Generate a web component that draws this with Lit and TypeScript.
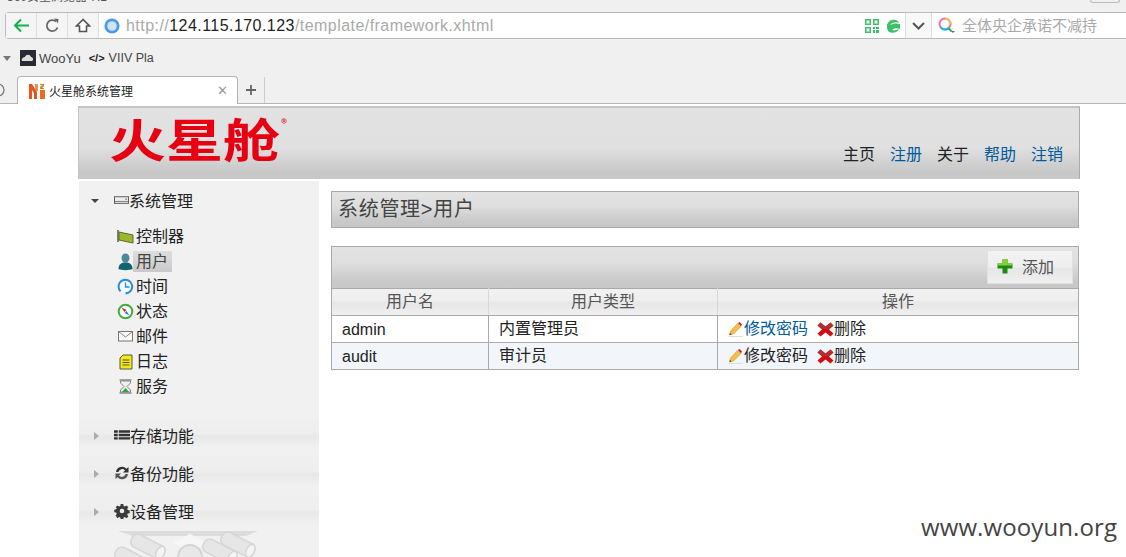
import { LitElement, html, css, svg } from "lit";
import { customElement } from "lit/decorators.js";

const icons: Record<string, unknown> = {
  ctrl: svg`<svg width="18" height="16" viewBox="0 0 18 16"><path d="M1 1v12" stroke="#555" stroke-width="1.5"/><path d="M2 3l14 3v8L2 11z" fill="#9ab82c" stroke="#5c6b2a"/></svg>`,
  user: svg`<svg width="17" height="18" viewBox="0 0 17 18"><ellipse cx="8.5" cy="5" rx="4" ry="4.6" fill="#4d8a96"/><path d="M1.500 16c0-5 3-6.500 7-6.500s7 1.500 7 6.500c-3 1.500-11 1.500-14 0z" fill="#0f6372"/></svg>`,
  time: svg`<svg width="17" height="17" viewBox="0 0 17 17"><path d="M3.600 13.300A6.800 6.800 0 1 1 8.500 15.300" fill="#fff" stroke="#2290dd" stroke-width="2"/><path d="M8.500 4.500v4.500h4" fill="none" stroke="#2290dd" stroke-width="1.300"/></svg>`,
  state: svg`<svg width="17" height="17" viewBox="0 0 17 17"><circle cx="8.500" cy="8.500" r="6.800" fill="#fff" stroke="#3fae38" stroke-width="2"/><path d="M4.500 4.500l5 2.500-2 2z" fill="#e8102a"/><path d="M12.500 12.500l-5-2.500 2-2z" fill="#1e7fd8"/></svg>`,
  mail: svg`<svg width="16" height="12" viewBox="0 0 16 12"><rect x=".5" y=".5" width="14" height="9.500" fill="#fafafa" stroke="#777"/><path d="M1 1l6.500 5L14 1" fill="none" stroke="#888"/></svg>`,
  log: svg`<svg width="14" height="16" viewBox="0 0 14 16"><path d="M4 1h9v14H1V4z" fill="#f6e90e" stroke="#555"/><path d="M3.500 6h7M3.500 8.500h7M3.500 11h7" stroke="#555"/></svg>`,
  svc: svg`<svg width="13" height="15" viewBox="0 0 13 15"><path d="M.5 1h12M.5 14h12" stroke="#888" stroke-width="1.600"/><path d="M1.500 2h10v2L8 7.500l3.500 3.500v2h-10v-2L5 7.500 1.500 4z" fill="#eee" stroke="#888"/><path d="M3 13l3.500-4 3.500 4z" fill="#25a83c"/></svg>`,
  sys: svg`<svg width="16" height="9" viewBox="0 0 16 9"><rect x=".5" y=".5" width="15" height="7" fill="#eee" stroke="#555"/><path d="M1 5.500h14" stroke="#777"/><path d="M12 3h2" stroke="#555"/></svg>`,
  store: svg`<svg width="17" height="10" viewBox="0 0 17 10"><path d="M0 0h4v2.500H0zM5 0h12v2.500H5zM0 3.700h4v2.500H0zM5 3.700h12v2.500H5zM0 7.400h4v2.500H0zM5 7.400h12v2.500H5z" fill="#333"/></svg>`,
  backup: svg`<svg width="16" height="14" viewBox="0 0 16 14"><path d="M2 6a6 6 0 0 1 10.500-3.200L14.500 1v5.500H9l2-2A3.700 3.700 0 0 0 4.500 6z" fill="#333"/><path d="M14 8a6 6 0 0 1-10.500 3.200L1.500 13V7.500H7l-2 2A3.700 3.700 0 0 0 11.500 8z" fill="#555"/></svg>`,
  gear: svg`<svg width="16" height="16" viewBox="0 0 16 16"><path d="M6.500 0h3l.4 2.200 1.500.6L13.300 1.500l2.100 2.100-1.300 1.900.6 1.500 2.300.5v3l-2.300.4-.6 1.500 1.300 1.900-2.100 2.100-1.900-1.300-1.500.6-.4 2.200h-3l-.4-2.200-1.500-.6-1.900 1.300L.6 13.300l1.300-1.900-.6-1.500L-1 9.500v-3l2.300-.5.6-1.500L.6 3.600 2.700 1.500l1.900 1.300 1.500-.6zM8 5.300a2.700 2.700 0 1 0 0 5.400 2.700 2.700 0 0 0 0-5.400z" transform="translate(1.100 1.100) scale(.86)" fill="#3a3a3a"/></svg>`,
  pencil: svg`<svg width="16" height="15" viewBox="0 0 15 15"><path d="M0 14.500h14" stroke="#ddd"/><path d="M1 13l1-4 7-7.500 3.500 3L5 12z" fill="#f2bf4a" stroke="#d6972a" stroke-width=".6"/><path d="M9.500 1l1.500-1 2.500 2.500-1 1.800z" fill="#c4202a"/><path d="M1 13l.5-2 1.500 1.300z" fill="#333"/></svg>`,
  del: svg`<svg width="17" height="15" viewBox="0 0 16 15"><path d="M3 .500l5 4 5-4 3 3-4.500 4 4.500 4-3 3-5-4-5 4-3-3 4.500-4L0 3.500z" fill="#d40d12"/><path d="M3 .500l5 4 5-4 3 3-4 3.500H4L0 3.500z" fill="#a83a3a" opacity=".75"/></svg>`,
};

const subItems = [
  ["ctrl", "控制器"], ["user", "用户"], ["time", "时间"], ["state", "状态"],
  ["mail", "邮件"], ["log", "日志"], ["svc", "服务"],
];
const groups = [["store", "存储功能"], ["backup", "备份功能"], ["gear", "设备管理"]];
const navs: [string, boolean][] = [["主页", false], ["注册", true], ["关于", false], ["帮助", true], ["注销", true]];
const rows: [string, string, boolean][] = [["admin", "内置管理员", true], ["audit", "审计员", false]];
const capsules = [[6, 14], [22, 1], [94, 6], [112, -1]];

@customElement("app-root")
export class AppRoot extends LitElement {
  static styles = css`
    :host { display: block; width: 1126px; height: 557px; position: relative; overflow: hidden; background: #fff; font-family: "Liberation Sans", "Noto Sans CJK SC", sans-serif; color: #222; }
    .chrome { background: #f0f0f0; height: 104px; display: flex; flex-direction: column; box-sizing: border-box; }
    .title { height: 12px; overflow: hidden; display: flex; justify-content: space-between; padding: 0 6px 0 7px; }
    .title span { font-size: 12px; line-height: 12px; margin-top: -9px; color: #555; }
    .winbox { width: 28px; height: 2px; border: 1px solid #bbb; border-top: 0; border-radius: 0 0 3px 3px; }
    .addr { height: 27px; margin-left: 5px; box-sizing: border-box; border: 1px solid #bbb; border-right: 0; border-radius: 4px 0 0 4px; background: #fff; display: flex; align-items: center; }
    .nb { width: 31px; height: 25px; box-sizing: border-box; display: flex; align-items: center; justify-content: center; background: #f5f5f5; border-right: 1px solid #ddd; flex: none; }
    .globe { margin: 0 6px 0 5px; display: flex; }
    .url { font-size: 16px; color: #aaa; flex: 1; white-space: nowrap; letter-spacing: .45px; }
    .url b { font-weight: 400; color: #222; }
    .qr { display: flex; gap: 7px; align-items: center; padding-right: 5px; }
    .sep { width: 25px; height: 25px; display: flex; align-items: center; justify-content: center; border-left: 1px solid #ddd; border-right: 1px solid #ddd; background: #f8f8f8; }
    .search { width: 194px; display: flex; align-items: center; padding-left: 6px; box-sizing: border-box; font-size: 15px; color: #aaa; gap: 7px; white-space: nowrap; }
    .search span { padding-bottom: 2px; }
    .bm { height: 37px; display: flex; align-items: center; font-size: 13px; color: #444; padding-top: 1px; box-sizing: border-box; }
    .bm .caret { width: 0; height: 0; border: 4px solid transparent; border-top: 5px solid #777; border-bottom: 0; margin: 0 9px 0 3px; }
    .bm .wy { width: 16px; height: 16px; background: #2a2a34; display: flex; margin-right: 3px; }
    .bm .code { font-size: 11px; font-weight: 700; margin: 0 4px 0 8px; color: #222; }
    .bm .v { font-size: 12.500px; }
    .tabs { height: 28px; display: flex; align-items: flex-end; position: relative; border-bottom: 1px solid #b5b5b5; box-sizing: border-box; }
    .circle { width: 17px; height: 26px; display: flex; align-items: center; }
    .tab { width: 221px; height: 28px; background: #fff; box-sizing: border-box; border: 1px solid #b5b5b5; border-bottom: 0; border-radius: 4px 4px 0 0; display: flex; align-items: center; padding: 0 9px 0 11px; font-size: 12px; color: #222; margin-bottom: -1px; }
    .tab .fav { margin-right: 4px; display: flex; }
    .tab .tx { flex: 1; }
    .tab .x { color: #999; font-size: 13px; line-height: 1; }
    .plus { width: 26px; height: 26px; display: flex; align-items: center; justify-content: center; border-right: 1px solid #ccc; }
    .page { width: 1002px; margin-left: 78px; display: flex; flex-direction: column; }
    .hd { margin-top: 2px; height: 73px; box-sizing: border-box; border: 1px solid #c4c4c4; border-bottom: 0; border-right-color: #aaa; border-top-width: 2px; background: linear-gradient(#e2e2e2 0, #e0e0e0 55%, #c8c8c8 90%, #c8c8c8); display: flex; justify-content: space-between; }
    .logo { font-family: "Noto Sans CJK SC", sans-serif; font-weight: 700; color: #e60012; font-size: 46px; line-height: 46px; margin: 6px 0 0 30px; width: 172px; white-space: nowrap; transform-origin: 0 0; transform: scaleX(1.24); position: relative; }
    .logo sup { position: absolute; left: 139px; top: 3px; font-size: 12px; line-height: 12px; font-weight: 400; transform: scaleX(.8); transform-origin: 0 0; }
    .nav { display: flex; gap: 15px; font-size: 16px; align-items: flex-end; padding: 0 16px 14px 0; line-height: 20px; color: #222; }
    .nav .lk { color: #005a9c; }
    .body { display: flex; margin-top: 2px; margin-left: 1px; }
    .side { width: 240px; height: 376px; background: #f1f1f1; flex: none; display: flex; flex-direction: column; overflow: hidden; }
    .head { height: 38px; box-sizing: border-box; padding-bottom: 2px; display: flex; align-items: center; font-size: 16px; color: #222; flex: none; }
    .tri-d { width: 0; height: 0; border: 4px solid transparent; border-top: 4px solid #444; border-bottom: 0; margin: 2px 15px 0 12px; }
    .tri-r { width: 0; height: 0; border: 4px solid transparent; border-left: 5px solid #aaa; border-right: 0; margin: 2px 15px 0 15px; }
    .head .ic { display: flex; width: 15px; flex: none; }
    .head.first { margin-top: 1px; }
    .subs { display: flex; flex-direction: column; padding: 4px 0 0 36px; flex: none; }
    .sub { height: 25px; display: flex; align-items: center; font-size: 16px; color: #222; }
    .sub .ic { width: 21px; display: flex; justify-content: center; flex: none; }
    .sub .t { padding: 1px 3px 1px 0; line-height: 20px; }
    .sub.on .t { background: linear-gradient(#dedede, #c9c9c9); color: #444; padding: 1px 4px 0 3px; margin-left: -3px; letter-spacing: 0; }
    .groups { margin-top: 18px; flex: none; }
    .band { background: linear-gradient(#f0f0f0, #eeeeee 45%, #e8e8e8 50%, #f0f0f0 80%, #f1f1f1); }
    .band .ic { width: 16px; overflow: visible; }
    .deco { display: block; margin-left: 34px; flex: none; }
    .main { margin-left: 12px; width: 748px; padding-top: 10px; display: flex; flex-direction: column; box-sizing: border-box; }
    .bar { background: linear-gradient(#e3e3e3, #dedede 40%, #c8c8c8 85%); border: 1px solid #aaa; box-sizing: border-box; }
    .crumb { height: 37px; font-size: 20px; line-height: 34px; padding-left: 6px; color: #444; letter-spacing: .7px; }
    .tools { height: 42px; margin-top: 18px; display: flex; justify-content: flex-end; align-items: center; padding-right: 5px; border-bottom: 0; }
    .add { width: 86px; height: 34px; box-sizing: border-box; border: 1px solid #e0e0e0; background: linear-gradient(#f2f2f2, #efefef 50%, #e6e6e6 55%, #f0f0f0); display: flex; align-items: center; font-size: 16px; color: #555; padding: 0 0 2px 9px; gap: 9px; margin-top: -1px; }
    table { border-collapse: collapse; table-layout: fixed; width: 748px; font-size: 16px; line-height: 20px; }
    th { font-weight: 400; color: #555; padding: 3px 0; border: 1px solid #aaa; border-left-color: #d8d8d8; border-right-color: #d8d8d8; background: linear-gradient(#f1f1f1, #eeeeee 45%, #e6e6e6 50%, #f0f0f0); }
    th:first-child { border-left-color: #aaa; }
    th:last-child { border-right-color: #aaa; }
    td { padding: 4px 0 2px 10px; border: 1px solid #aaa; color: #222; white-space: nowrap; }
    td.cjk { padding: 3px 0 3px 10px; }
    tr.alt td { background: #f2f5fa; }
    .ops { display: flex; align-items: center; }
    .ops .lk { color: #005a9c; }
    .ops .gap { width: 9px; }
    .ops svg { flex: none; }
    .mark { position: absolute; left: 921px; top: 512px; font-family: "Open Sans", sans-serif; font-size: 24px; line-height: 30px; color: #444; white-space: nowrap; letter-spacing: .1px; }
  `;

  render() {
    return html`
      <div class="chrome">
        <div class="title"><span>360安全浏览器 7.1</span><div class="winbox"></div></div>
        <div class="addr">
          <div class="nb"><svg width="17" height="15" viewBox="0 0 17 15"><path d="M16 7.500H2M8 1.500l-6 6 6 6" fill="none" stroke="#11b14c" stroke-width="2"/></svg></div>
          <div class="nb"><svg width="15" height="15" viewBox="0 0 15 15"><path d="M12.500 9.500A5.500 5.500 0 1 1 11 3.500" fill="none" stroke="#666" stroke-width="1.800"/><path d="M9 .5l4.500.5-.5 4.500z" fill="#666"/></svg></div>
          <div class="nb"><svg width="16" height="15" viewBox="0 0 16 15"><path d="M8 1.500L1.500 8H4.500v5.500h7V8H14.500z" fill="#fff" stroke="#555" stroke-width="1.600"/></svg></div>
          <div class="globe"><svg width="16" height="16" viewBox="0 0 16 16"><circle cx="8" cy="8" r="7.600" fill="#4a9be4"/><circle cx="8" cy="8" r="4.800" fill="#cfe4f8"/></svg></div>
          <div class="url">http://<b>124.115.170.123</b>/template/framework.xhtml</div>
          <div class="qr">
            <svg width="14" height="14" viewBox="0 0 14 14"><path d="M0 0h6v6H0zM1.500 1.500v3h3v-3zM8 0h6v6H8zM9.500 1.500v3h3v-3zM0 8h6v6H0zM1.500 9.500v3h3v-3zM8 8h2v2H8zM11 8h3v2h-3zM8 11h2v3H8zM11 11h3v3h-3z" fill="#3cc06a" fill-rule="evenodd"/></svg>
            <svg width="14" height="14" viewBox="0 0 14 14"><path d="M3 13C-1 8 1 2 6 1c3-.7 6 .3 7 3-3-1.500-7-.5-9 2 3-1.500 6-2 10-1 .5 2 .3 4 0 5-3-1-6-1-8 1 2 1 5 0 7-1-1 3-6 5-10 3z" fill="#3cc06a"/></svg>
          </div>
          <div class="sep"><svg width="13" height="8" viewBox="0 0 13 8"><path d="M1 1l5.500 5.500L12 1" fill="none" stroke="#555" stroke-width="2"/></svg></div>
          <div class="search">
            <svg width="17" height="17" viewBox="0 0 17 17"><circle cx="7" cy="7" r="5.500" fill="none" stroke="#ee6fa8" stroke-width="2"/><path d="M2.500 10A5.500 5.500 0 0 0 11 10.800" fill="none" stroke="#19b5e8" stroke-width="2"/><path d="M7 1.500A5.500 5.500 0 0 1 12.500 7" fill="none" stroke="#f0c040" stroke-width="2"/><path d="M10.500 11l3 3.500" stroke="#30b050" stroke-width="2"/><path d="M13 14h4l-2 2z" fill="#666"/></svg>
            <span>全体央企承诺不减持</span>
          </div>
        </div>
        <div class="bm">
          <span class="caret"></span>
          <span class="wy"><svg width="16" height="16" viewBox="0 0 16 16"><path d="M2 11c-1-3 2-4 3-4 1-3 5-3 6 0 2 0 3 3 1 4z" fill="#ddd"/></svg></span>
          <span>WooYu</span>
          <span class="code">&lt;/&gt;</span>
          <span class="v">VIIV Pla</span>
        </div>
        <div class="tabs">
          <div class="circle"><svg width="17" height="18" viewBox="0 0 17 18"><path d="M-3 3a6 6 0 1 1 0 12 6 6 0 1 1 0-12" transform="translate(1 0)" fill="none" stroke="#777" stroke-width="1.300"/></svg></div>
          <div class="tab">
            <span class="fav"><svg width="16" height="16" viewBox="0 0 16 16"><path d="M0 1l3 0 5 8v7H5V10L3 7v9H0z" fill="#e8541c"/><path d="M6 1h3v7H6z" fill="#d8631f" opacity=".7"/><path d="M11 1h4v2l-2 2h2v1h-4V4l2-2h-2z" fill="#d88a20"/><path d="M11 7h5v9h-5z" fill="#ee6a24"/></svg></span>
            <span class="tx">火星舱系统管理</span>
            <span class="x">✕</span>
          </div>
          <div class="plus"><svg width="12" height="12" viewBox="0 0 12 12"><path d="M6 1v10M1 6h10" stroke="#666" stroke-width="1.800"/></svg></div>
        </div>
      </div>
      <div class="page">
        <div class="hd">
          <div class="logo">火星舱<sup>®</sup></div>
          <div class="nav">${navs.map(([t, l]) => html`<span class=${l ? "lk" : ""}>${t}</span>`)}</div>
        </div>
        <div class="body">
          <div class="side">
            <div class="head first"><span class="tri-d"></span><span class="ic">${icons.sys}</span><span>系统管理</span></div>
            <div class="subs">
              ${subItems.map(([ic, t]) => html`<div class="sub ${t === "用户" ? "on" : ""}"><span class="ic">${icons[ic]}</span><span class="t">${t}</span></div>`)}
            </div>
            <div class="groups">
              ${groups.map(([ic, t]) => html`<div class="head band"><span class="tri-r"></span><span class="ic">${icons[ic]}</span><span>${t}</span></div>`)}
            </div>
            <svg class="deco" width="150" height="26" viewBox="0 0 150 26">
              <path d="M5 0h140l-12 5H80l-3-3-3 3H20z" fill="#dcdcdc"/>
              <path d="M60 12l17-9 17 9-17 9z" fill="#f6f6f6"/>
              <circle cx="77" cy="26" r="12" fill="#e8e8e8" stroke="#d4d4d4" stroke-width="2"/>
              <g fill="#e6e6e6" stroke="#d6d6d6" stroke-width="1.500">
                ${capsules.map(([x, y]) => svg`<g transform="translate(${x} ${y}) rotate(27)"><rect x="0" y="0" width="36" height="14" rx="6"/><ellipse cx="32" cy="7" rx="4" ry="7" fill="#f4f4f4"/></g>`)}
              </g>
            </svg>
          </div>
          <div class="main">
            <div class="bar crumb">系统管理&gt;用户</div>
            <div class="bar tools">
              <div class="add">
                <svg width="16" height="16" viewBox="0 0 16 16"><path d="M5.500 1h5v4.500H15.500v5h-5V15.500h-5v-5H.5v-5h5z" fill="#1d8a12"/><path d="M5.500 1h5v4.500H15.500v2H.5v-2h5z" fill="#85d03a"/></svg>
                <span>添加</span>
              </div>
            </div>
            <table>
              <colgroup><col style="width:157px"/><col style="width:229px"/><col/></colgroup>
              <thead><tr><th>用户名</th><th>用户类型</th><th>操作</th></tr></thead>
              <tbody>
                ${rows.map(([u, ty, link]) => html`<tr class=${link ? "" : "alt"}>
                  <td>${u}</td><td class="cjk">${ty}</td>
                  <td class="cjk"><div class="ops">${icons.pencil}<span class=${link ? "lk" : ""}>修改密码</span><span class="gap"></span>${icons.del}<span>删除</span></div></td>
                </tr>`)}
              </tbody>
            </table>
          </div>
        </div>
      </div>
      <div class="mark">www.wooyun.org</div>
    `;
  }
}
